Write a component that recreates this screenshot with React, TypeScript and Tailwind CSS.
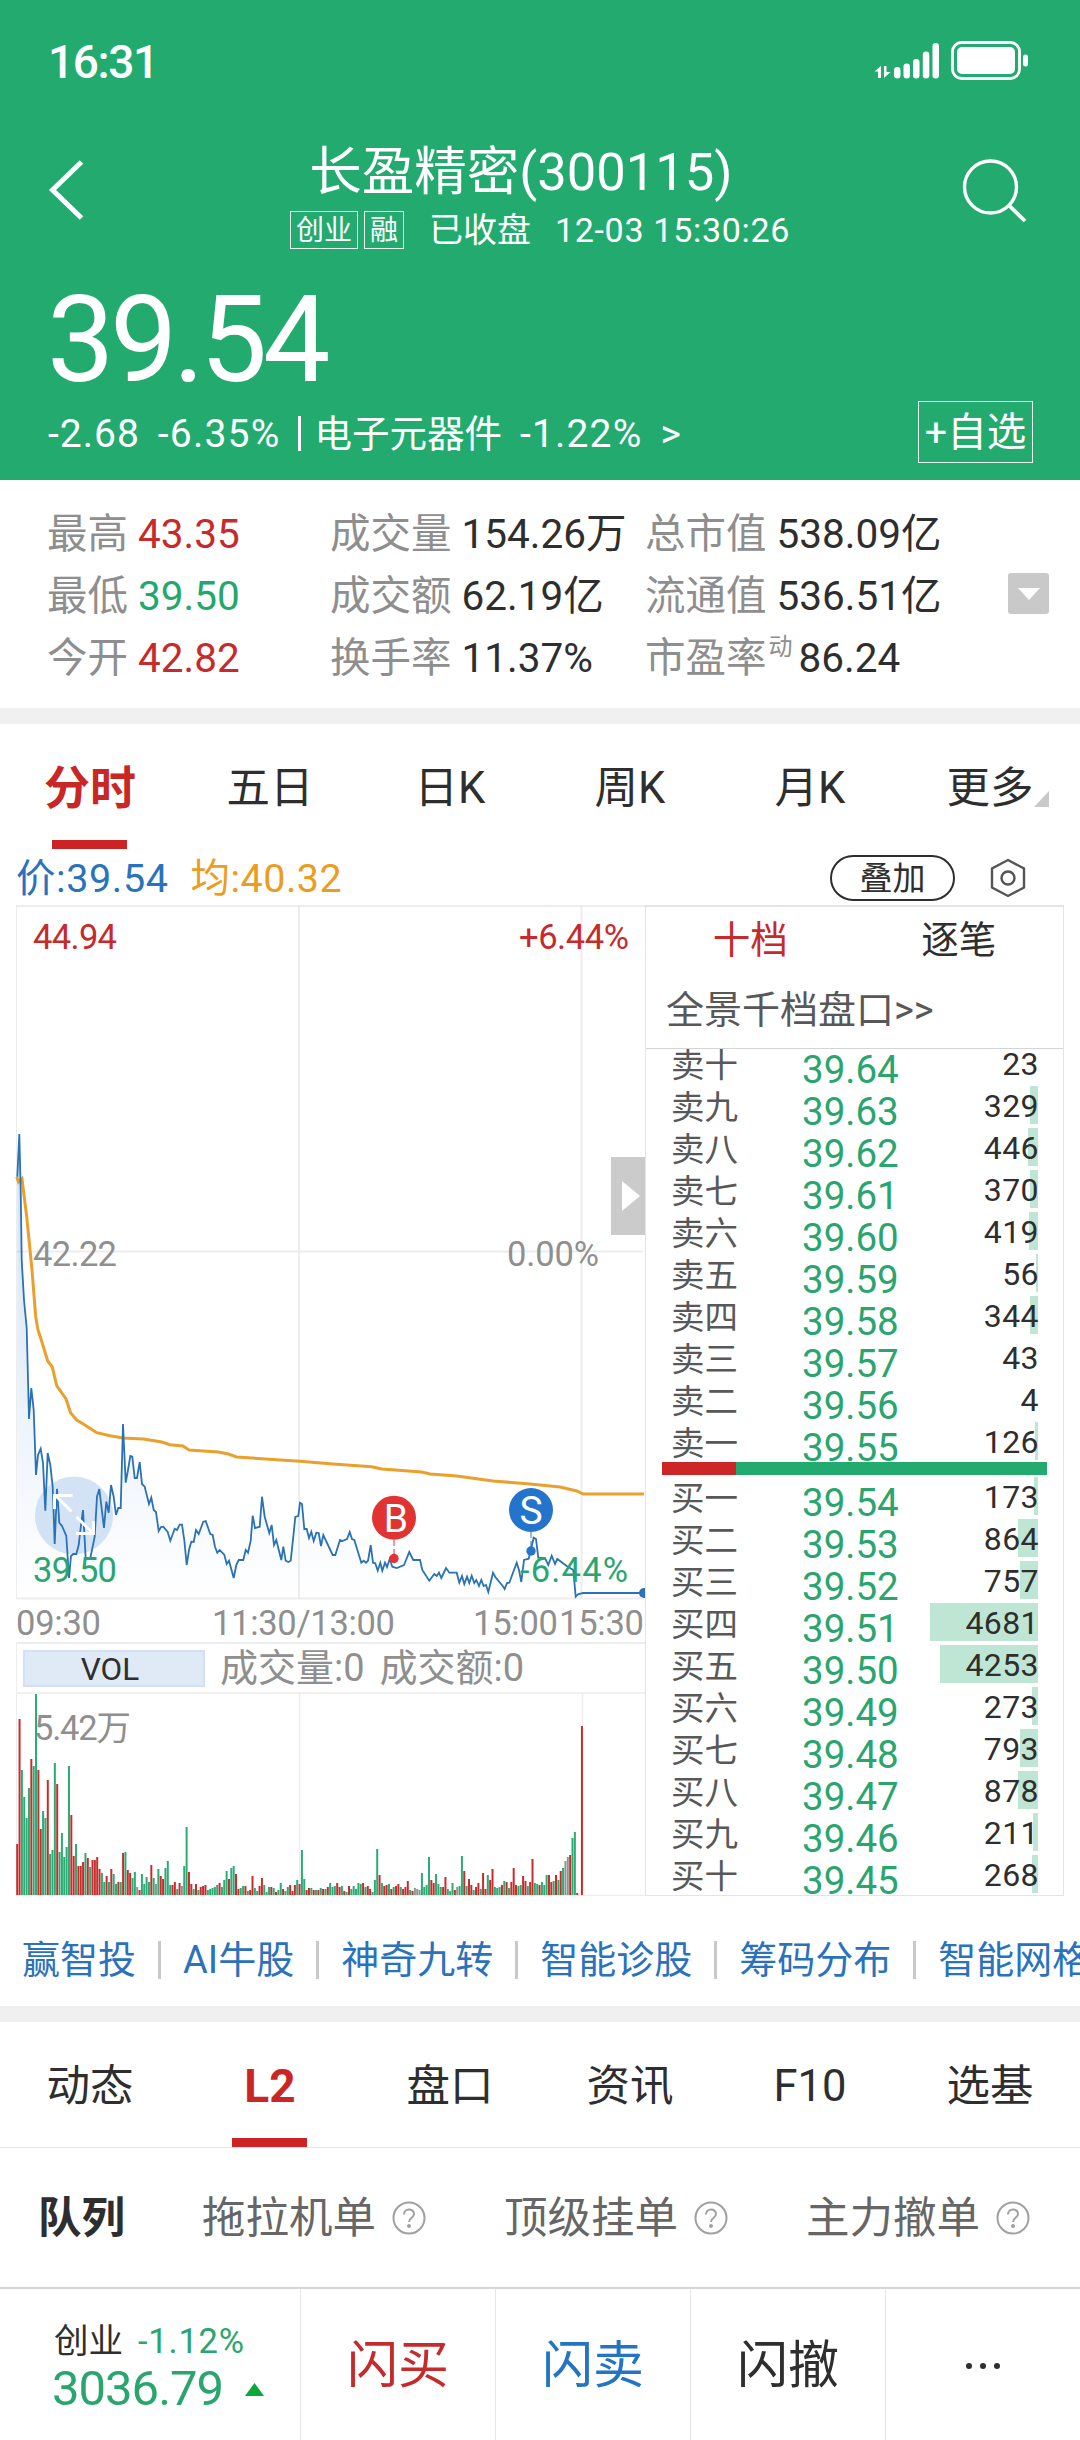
import React from "react";
import clsx from "clsx";

const STATS = [
  [
    { label: "最高", value: "43.35", color: "text-[#c62a2a]" },
    { label: "成交量", value: "154.26万" },
    { label: "总市值", value: "538.09亿" },
  ],
  [
    { label: "最低", value: "39.50", color: "text-[#23a76d]" },
    { label: "成交额", value: "62.19亿" },
    { label: "流通值", value: "536.51亿" },
  ],
  [
    { label: "今开", value: "42.82", color: "text-[#c62a2a]" },
    { label: "换手率", value: "11.37%" },
    { label: "市盈率", sup: "动", value: "86.24" },
  ],
];

const PERIOD_TABS = ["分时", "五日", "日K", "周K", "月K", "更多"];
const INFO_TABS = ["动态", "L2", "盘口", "资讯", "F10", "选基"];
const LINKS = ["赢智投", "AI牛股", "神奇九转", "智能诊股", "筹码分布", "智能网格"];
const SUB_TABS = ["拖拉机单", "顶级挂单", "主力撤单"];

type Level = { name: string; price: string; qty: number; bar: number };

const SELLS: Level[] = [
  { name: "卖十", price: "39.64", qty: 23, bar: 0 },
  { name: "卖九", price: "39.63", qty: 329, bar: 8 },
  { name: "卖八", price: "39.62", qty: 446, bar: 10 },
  { name: "卖七", price: "39.61", qty: 370, bar: 8 },
  { name: "卖六", price: "39.60", qty: 419, bar: 9 },
  { name: "卖五", price: "39.59", qty: 56, bar: 2 },
  { name: "卖四", price: "39.58", qty: 344, bar: 8 },
  { name: "卖三", price: "39.57", qty: 43, bar: 0 },
  { name: "卖二", price: "39.56", qty: 4, bar: 0 },
  { name: "卖一", price: "39.55", qty: 126, bar: 3 },
];

const BUYS: Level[] = [
  { name: "买一", price: "39.54", qty: 173, bar: 4 },
  { name: "买二", price: "39.53", qty: 864, bar: 20 },
  { name: "买三", price: "39.52", qty: 757, bar: 18 },
  { name: "买四", price: "39.51", qty: 4681, bar: 108 },
  { name: "买五", price: "39.50", qty: 4253, bar: 98 },
  { name: "买六", price: "39.49", qty: 273, bar: 6 },
  { name: "买七", price: "39.48", qty: 793, bar: 18 },
  { name: "买八", price: "39.47", qty: 878, bar: 20 },
  { name: "买九", price: "39.46", qty: 211, bar: 5 },
  { name: "买十", price: "39.45", qty: 268, bar: 6 },
];

const PRICE_LINE =
  "17.3,1176.7 19.3,1134 20.7,1190 21.7,1260 24,1300 26.7,1328 29,1419 31.3,1388 33.7,1410 36,1475 38,1455 40.7,1448.7 43,1463 45.3,1510.7 47.7,1453 50.3,1465 52.7,1486.7 54.7,1544 57,1488.7 59.3,1522.7 62,1526 66.3,1536 69,1578 71,1556 73.3,1554 76.3,1554 78.7,1545 81,1525 83,1510 85.7,1558 90.3,1558 94.7,1536.7 97,1496.7 99.3,1489 104,1528 106.3,1501.7 108.7,1512.7 111,1485 113.7,1496.7 116,1515 118.3,1508 120.7,1508 123,1424 125.7,1482.7 128,1470 130.3,1456 132.3,1456.7 134.7,1478 137,1478 139.7,1462 142,1484 144.7,1486.7 149,1504 151.3,1497.7 153.7,1510 156,1512 158.7,1531 161,1527 163.3,1526.7 167.7,1532 170.3,1540.7 174.7,1528.7 177,1530 179.7,1524.7 182,1524.7 184.3,1540 186.7,1565 189,1550 191.3,1541.7 193.7,1542 196,1530 198.7,1534 201.3,1527 203.3,1521.7 205.7,1521 210.3,1534 212.7,1535 215,1546.7 217.3,1552.7 219.7,1550 224.3,1554.7 226.7,1564 229,1560.7 233.7,1578 236.3,1565 238.7,1560 243.3,1560 245.7,1550 248,1552.7 250.7,1540.7 252.7,1515.7 255,1528 259.7,1526.7 262,1496.7 264.7,1516.7 269.3,1533 271.7,1525 274,1545 276.3,1540 281.3,1560 283.3,1546.7 285.7,1560.7 288.3,1562 290.7,1560.7 293.3,1536.7 295.3,1517 298.3,1516 300,1502.7 302,1504 304.3,1529 306.7,1529 309,1538 311.3,1531.7 313.7,1541 316.3,1532.7 318.7,1533 321,1546 323.3,1535 332.7,1555 335.3,1555 340,1540 342.3,1541 347,1539 349.7,1532 352,1539 354.3,1540 361.3,1562.7 363.7,1560.7 366,1562.7 368,1560.7 370.7,1545 373,1562.7 375.3,1563.3 377.7,1570.7 380.3,1562.7 382.3,1570.7 385,1562.7 387,1567 389.7,1559 392.3,1566.7 396.7,1568 404,1565 409.3,1552 413.3,1560 420,1560 422.3,1570 429.3,1580.7 434.3,1574 436.7,1576 439,1572.7 441.3,1578 446,1568 449.3,1572.7 456.7,1572.7 459.3,1582.7 462,1576 464.3,1584 467,1576.7 469.3,1583 471.7,1575.7 474.3,1583 476.3,1580 479,1586 481.3,1580 483.7,1586 486,1585 488.3,1592 493,1572.7 495.3,1577 502.7,1586 504.7,1589 507,1583 509.3,1582.7 516.7,1562.7 519,1570 521.3,1582 524,1560 528.7,1558.7 533.7,1537.7 536,1539 538.3,1557.7 545,1558 548.3,1565 551.7,1555.7 555,1564 557.3,1559 566.7,1566 573.3,1570 575.7,1596.7 578.3,1594 583.3,1593 644,1593";

const AVG_LINE =
  "16.7,1177 18.5,1182 22,1178.7 26.7,1216.7 32,1270 35.7,1316.7 38,1330 40.3,1336.7 47.7,1361 52.3,1367 56.7,1385.7 66,1399 70.7,1413 76.7,1420 83.3,1424 96.7,1432.7 110,1435.7 123,1438 143.3,1439 161.7,1442 170,1444.7 183,1446 189,1450 218.3,1452 228.3,1454 236.7,1457 276.7,1459.7 300,1461.3 333,1464 371.7,1466.7 381.7,1469 421.7,1472 430,1474 456.7,1476 493,1481 530,1484 560,1487 576.7,1491 583.3,1494 644,1494";

// one entry per minute: bar height followed by r (up), g (down) or n (flat)
const VOLUMES =
  "51r 176r 125g 98g 77g 107g 136r 129g 201g 125r 66r 84g 77g 115r 41g 45g 132g 111r 43g 62g 38g 48g 129g 80r 39r 51g 29r 29r 33r 42g 37r 28g 35r 35r 38r 26r 22g 13g 19r 13g 26r 21g 11g 13r 13g 42r 43g 25r 22r 17g 23g 8n 5r 21g 11g 18g 13g 30r 17g 11n 26g 19r 16r 27g 34g 10g 10r 13r 6g 12r 9n 29g 68g 23r 11r 6g 11r 5g 8r 9r 10r 5g 6g 7g 8g 10g 12r 8g 15g 24g 16r 27g 29g 21r 6r 7g 9g 9r 4g 5r 19r 7g 4g 9r 17r 10g 3g 8g 8r 7g 3r 5g 12g 6r 4g 8g 10r 4r 10r 15g 11r 45g 16g 5r 7r 7g 5r 5g 5r 7g 6r 6g 8r 12g 8g 9g 12r 8r 9g 4r 3g 9r 6g 9g 6g 12g 11g 12r 8g 9r 6r 3g 15g 46g 20r 12g 9r 10r 11g 6r 8g 9r 11r 8g 6r 8r 14r 5g 4r 7n 6n 5n 22g 8g 10g 38g 15r 12r 21g 11g 8g 8r 18r 6g 4g 12g 5r 8n 9g 39g 24r 9g 16r 10r 5g 8r 12r 6g 22r 6r 20g 15r 26r 8g 7g 8g 10r 14g 13r 7g 13r 27r 10r 9g 10g 19r 14r 9g 13r 36r 12g 11g 10r 13g 10g 20g 20r 13r 14g 20r 15g 24r 27g 34n 38n 40r 57g 63g 2r 0n 169r"
    .split(" ")
    .map((v) => ({ h: parseInt(v, 10), c: v.slice(-1) }));

const VOLUME_COLOR: Record<string, string> = {
  r: "#c92c2c",
  g: "#2cab74",
  n: "#8c9791",
};

const StatusBar: React.FC = () => (
  <div className="flex items-start justify-between h-[128px] pl-[48px] pr-[50px] pt-[36px]">
    <span className="text-[46px] leading-[52px] font-medium tracking-[-1.4px]">16:31</span>
    <svg width="158" height="48" viewBox="872 36 158 48" fill="#fff">
      <path d="M874.5 71.5 L881 66 V78 H878 V71.5 Z M884 66 H886.500 V72 H890.500 L884 78 Z" />
      <rect x="894" y="67" width="6.500" height="11.500" rx="3.200" />
      <rect x="903.500" y="63.500" width="6.500" height="15" rx="3.200" />
      <rect x="913" y="59" width="6.500" height="19.500" rx="3.200" />
      <rect x="922.800" y="51.500" width="6.500" height="27" rx="3.200" />
      <rect x="932.500" y="43" width="6.500" height="35.500" rx="3.200" />
      <rect x="952.500" y="42.500" width="67" height="36" rx="9" fill="none" stroke="#fff" strokeWidth="2.800" />
      <rect x="957" y="47" width="58" height="27" rx="5" />
      <rect x="1023" y="54.500" width="5" height="12" rx="2.500" />
    </svg>
  </div>
);

const Header: React.FC = () => (
  <header className="bg-[#23ab6f] text-white h-[480px]">
    <StatusBar />
    <div className="flex justify-between h-[136px] pl-[46px] pr-[52px]">
      <svg width="72" height="64" viewBox="0 0 72 64" className="mt-[31px]">
        <path d="M35.500 3 L6.500 31 L35.500 59" fill="none" stroke="#fff" strokeWidth="5" />
      </svg>
      <div className="flex flex-col items-center pt-[14px]">
        <h1 className="mr-[38px] text-[52.500px] leading-[60px]">长盈精密(300115)</h1>
        <div className="flex items-center mt-[9px] h-[38px] text-[34px] leading-[38px]">
          <span className="border border-white/90 w-[68px] h-[38px] text-center text-[28px] leading-[37px]">创业</span>
          <span className="border border-white/90 w-[40px] h-[38px] ml-[6px] text-center text-[28px] leading-[37px]">融</span>
          <span className="ml-[25px]">已收盘</span>
          <span className="ml-[24px] tracking-[0.7px]">12-03 15:30:26</span>
        </div>
      </div>
      <svg width="66" height="70" viewBox="962 156 66 70" className="mt-[28px]" fill="none" stroke="#fff" strokeWidth="3.400">
        <circle cx="990.500" cy="187" r="26" />
        <path d="M1009 205.500 L1025 221" strokeWidth="3.800" />
      </svg>
    </div>
    <div className="h-[137px] pl-[47px] pt-[6px] text-[120px] leading-[140px] tracking-[-4.500px]">39.54</div>
    <div className="flex items-center justify-between h-[62px] pl-[48px] pr-[47px]">
      <div className="flex items-center pt-[3px] text-[39px] leading-[46px]">
        <span className="tracking-[1px]">-2.68</span>
        <span className="ml-[18px] tracking-[1.2px]">-6.35%</span>
        <span className="w-[3px] h-[35px] ml-[18px] bg-white" />
        <span className="ml-[13px] text-[37.500px]">电子元器件</span>
        <span className="ml-[18px] tracking-[1.2px]">-1.22%</span>
        <span className="ml-[18px]">&gt;</span>
      </div>
      <button className="border border-white/90 w-[115px] h-[62px] text-[39.500px] leading-[61px]">+自选</button>
    </div>
  </header>
);

const Stats: React.FC = () => (
  <section className="relative h-[228px] pt-[23px] pl-[47px]">
    {STATS.map((row, i) => (
      <div key={i} className="grid grid-cols-[283px_315px_1fr] h-[62px] text-[40.500px] leading-[62px] text-[#2e2e2e]">
        {row.map((s) => (
          <div key={s.label} className="flex whitespace-nowrap">
            <span className="text-[#8e8e8e]">{s.label}</span>
            {"sup" in s && <sup className="ml-[2px] -mr-[4px] text-[24px] leading-[40px] top-0 text-[#8e8e8e]">{s.sup}</sup>}
            <span className={clsx("ml-[10px]", "color" in s && s.color)}>{s.value}</span>
          </div>
        ))}
      </div>
    ))}
    <div className="absolute left-[1008px] top-[93px] w-[41px] h-[41px] rounded-[3px] bg-[#c9c9c9] flex items-center justify-center">
      <svg width="22" height="12" viewBox="0 0 22 12">
        <path d="M0 0 H22 L11 12 Z" fill="#fff" />
      </svg>
    </div>
  </section>
);

const Tabs: React.FC<{ items: string[]; active: string; className: string }> = ({ items, active, className }) => (
  <nav className={clsx("grid grid-cols-6 grid-rows-1 text-[43.500px] text-center text-[#2e2e2e]", className)}>
    {items.map((t) => (
      <div key={t} className={clsx("relative", t === active && "font-bold text-[#c92626] text-[46px]")}>
        {t}
        {t === active && <span className="absolute bottom-0 left-[52px] w-[75px] h-[9px] bg-[#cc2424]" />}
        {t === "更多" && (
          <svg className="absolute right-[31px] bottom-[42px]" width="15" height="16" viewBox="0 0 15 16">
            <path d="M15 0 V16 H0 Z" fill="#c9c9c9" />
          </svg>
        )}
      </div>
    ))}
  </nav>
);

const PriceInfo: React.FC = () => (
  <div className="flex items-center h-[56px] pl-[16px] pr-[54px] pt-[2px] text-[39.500px] leading-[57px]">
    <span className="text-[#2a72bb] tracking-[0.6px]">价:39.54</span>
    <span className="ml-[22px] text-[#eb9d22] tracking-[0.5px]">均:40.32</span>
    <span className="ml-auto w-[125px] h-[46px] rounded-full border-2 border-[#2e2e2e] text-center text-[33px] leading-[43px] text-[#2e2e2e]">
      叠加
    </span>
    <svg className="ml-[35px]" width="36" height="40" viewBox="0 0 36 40" fill="none" stroke="#555" strokeWidth="2.400">
      <path d="M18 2 L34 10.500 V29.500 L18 38 L2 29.500 V10.500 Z" />
      <circle cx="18" cy="20" r="6.500" />
    </svg>
  </div>
);

const PriceChart: React.FC = () => (
  <svg width="645" height="737" viewBox="0 905 645 737" className="block" fontSize="34.5">
    <defs>
      <linearGradient id="area" x1="0" y1="0" x2="0" y2="1">
        <stop offset="0" stopColor="#2a78c4" stopOpacity="0.22" />
        <stop offset="1" stopColor="#2a78c4" stopOpacity="0" />
      </linearGradient>
    </defs>
    <g stroke="#ededed" strokeWidth="2" fill="none">
      <path d="M16 906 H645 M16 1251.500 H643 M16 1598.500 H645 M299 906 V1598 M581.500 906 V1598" />
      <path d="M16.500 906 V1598" strokeWidth="1" />
    </g>
    <polygon points={`17,1597 ${PRICE_LINE} 644,1597`} fill="url(#area)" />
    <g fill="#8f8f8f">
      <text x="33" y="1266" textLength="84">42.22</text>
      <text x="507" y="1266" textLength="92">0.00%</text>
    </g>
    <circle cx="74" cy="1515.500" r="39" fill="#c4daf1" fillOpacity="0.75" />
    <polyline points={AVG_LINE} fill="none" stroke="#e9a02c" strokeWidth="3" />
    <polyline points={PRICE_LINE} fill="none" stroke="#2a72b5" strokeWidth="1.800" />
    <path
      d="M71.500 1511.500 L56 1496 M54.500 1509 V1495.500 H72.500 M76.500 1517 L93 1533 M76 1533.500 H93.500 V1521"
      fill="none"
      stroke="#fff"
      strokeWidth="3"
    />
    <g fill="#c62a2a">
      <text x="33" y="949" textLength="84">44.94</text>
      <text x="519" y="949" textLength="110">+6.44%</text>
    </g>
    <g fill="#2ba56f">
      <text x="33" y="1582" textLength="84">39.50</text>
      <text x="520" y="1582" textLength="108">-6.44%</text>
    </g>
    <circle cx="644" cy="1593" r="5" fill="#2a72b5" />

    {/* trade marks */}
    <path d="M394 1540 V1556" stroke="#e23333" strokeDasharray="6 3" />
    <circle cx="394" cy="1517.700" r="22" fill="#e23333" />
    <circle cx="394" cy="1558.500" r="4.700" fill="#e23333" />
    <path d="M531 1532 V1548" stroke="#2474cb" strokeDasharray="6 3" />
    <circle cx="531" cy="1510" r="22" fill="#2474cb" />
    <circle cx="531" cy="1551" r="4.700" fill="#2474cb" />
    <g fill="#fff" fontSize="39" textAnchor="middle">
      <text x="396" y="1531.500">B</text>
      <text x="531" y="1524">S</text>
    </g>

    <g fill="#8f8f8f">
      <text x="16" y="1635" textLength="85">09:30</text>
      <text x="212" y="1635" textLength="183">11:30/13:00</text>
      <text x="473" y="1635" textLength="85">15:00</text>
      <text x="559" y="1635" textLength="85">15:30</text>
    </g>

    {/* expand handle for the order book */}
    <rect x="611" y="1157" width="34" height="78" fill="#cbcbcb" />
    <path d="M622 1181 L640 1196 L622 1211 Z" fill="#fff" />
  </svg>
);

const VolumeChart: React.FC = () => (
  <svg width="645" height="204" viewBox="0 1692 645 204" className="block" fontSize="34.5">
    <g stroke="#ededed" strokeWidth="1.500" fill="none">
      <path d="M16 1693 H645 M16 1895.500 H645 M299.500 1693 V1895 M582.500 1693 V1895" />
      <path d="M16.500 1693 V1895" strokeWidth="1" />
    </g>
    <text x="34" y="1740" fill="#8f8f8f" textLength="97">
      5.42万
    </text>
    {VOLUMES.map((v, i) => (
      <rect key={i} x={16.2 + i * 2.353} y={1895 - v.h} width="2" height={v.h} fill={VOLUME_COLOR[v.c]} />
    ))}
  </svg>
);

const LevelRow: React.FC<{ level: Level }> = ({ level }) => (
  <div className="relative flex h-[42px] pl-[25px] pr-[24px]">
    <span
      className="absolute right-[25px] top-0 h-[38px] bg-[#bfe6d4]"
      style={{ width: level.bar }}
    />
    <span className="w-[131px] text-[33.500px] leading-[43px] text-[#585858]">{level.name}</span>
    <span className="text-[38.500px] leading-[51px] text-[#2ba56f]">{level.price}</span>
    <span className="relative ml-auto text-[32px] leading-[40px] text-[#2e2e2e] tracking-[0.4px]">{level.qty}</span>
  </div>
);

const OrderBook: React.FC = () => (
  <div className="w-[419px] h-[991px] border-x border-t-2 border-b border-[#e4e4e4]">
    <div className="grid grid-cols-2 h-[67px] text-center text-[37.500px] leading-[67px] text-[#2e2e2e]">
      <span className="text-[#c62a2a]">十档</span>
      <span>逐笔</span>
    </div>
    <div className="h-[75px] pl-[20px] border-b border-[#d4d4d4] text-[38px] leading-[73px] text-[#585858]">
      全景千档盘口&gt;&gt;
    </div>
    <div className="-mt-[5px] h-[418px]">
      {SELLS.map((l) => (
        <LevelRow key={l.name} level={l} />
      ))}
    </div>
    <div className="relative flex h-[13px] mb-[2px] ml-[16px] mr-[16px]">
      <span className="w-[74px] bg-[#cd2626]" />
      <span className="flex-1 bg-[#23ab6f]" />
    </div>
    {BUYS.map((l) => (
      <LevelRow key={l.name} level={l} />
    ))}
  </div>
);

const Market: React.FC = () => (
  <div className="flex h-[991px]">
    <div className="w-[645px]">
      <PriceChart />
      <div className="flex items-center h-[50px] ml-[16px] pl-[6px] border-t-2 border-l border-[#ededed] text-[38px] leading-[50px] text-[#8f8f8f] whitespace-nowrap">
        <span className="w-[182px] h-[37px] pr-[8px] border-2 border-[#d2e0f5] bg-[#e0e9f6] text-center text-[31.500px] leading-[35px] text-[#2e2e2e]">
          VOL
        </span>
        <span className="ml-[15px]">成交量:0</span>
        <span className="ml-[15px]">成交额:0</span>
      </div>
      <VolumeChart />
    </div>
    <OrderBook />
  </div>
);

const Links: React.FC = () => (
  <div className="flex items-center h-[110px] pt-[18px] pl-[22px] overflow-hidden whitespace-nowrap text-[38px] leading-[50px] text-[#2a72bb]">
    {LINKS.map((l, i) => (
      <React.Fragment key={l}>
        {i > 0 && <span className="shrink-0 w-[3px] h-[38px] mx-[22px] bg-[#c9c9c9]" />}
        <span className="shrink-0">{l}</span>
      </React.Fragment>
    ))}
  </div>
);

const SubTabs: React.FC = () => (
  <div className="flex items-center h-[139px] pt-[2px] pl-[38px] text-[43.500px] leading-[60px] text-[#666]">
    <span className="shrink-0 w-[164px] font-bold text-[#2e2e2e]">队列</span>
    {SUB_TABS.map((t) => (
      <div key={t} className="shrink-0 flex items-center w-[302px]">
        {t}
        <svg className="ml-[16px] -mt-[2px]" width="34" height="34" viewBox="0 0 34 34" fill="none" stroke="#a0a0a0" strokeWidth="2">
          <circle cx="17" cy="17" r="15.500" />
          <path d="M12 13.500 C12 7 22 7 22 13 C22 17 17 16.500 17 21" />
          <circle cx="17" cy="25" r="1" fill="#a0a0a0" />
        </svg>
      </div>
    ))}
  </div>
);

const BottomBar: React.FC = () => (
  <footer className="grid grid-cols-[300px_195px_195px_195px_195px] h-[153px] border-t-2 border-[#d6d6d6] text-center text-[51px] leading-[154px] text-[#2e2e2e]">
    <div className="pl-[54px] pt-[30px] text-left text-[#2ba56f]">
      <div className="flex text-[34.500px] leading-[44px]">
        <span className="text-[#2e2e2e]">创业</span>
        <span className="ml-[15px] tracking-[0.8px]">-1.12%</span>
      </div>
      <div className="flex items-center -ml-[2px] text-[49px] leading-[52px] tracking-[-1px]">
        3036.79
        <svg className="ml-[22px]" width="19" height="13" viewBox="0 0 19 13">
          <path d="M9.500 0 L19 13 H0 Z" fill="#07a83c" />
        </svg>
      </div>
    </div>
    <div className="border-l border-[#e6e6e6] text-[#c62a2a]">闪买</div>
    <div className="border-l border-[#e6e6e6] text-[#2474c4]">闪卖</div>
    <div className="border-l border-[#e6e6e6]">闪撤</div>
    <div className="border-l border-[#e6e6e6] flex items-center justify-center gap-[8px]">
      <i className="w-[6px] h-[6px] rounded-full bg-[#2e2e2e]" />
      <i className="w-[6px] h-[6px] rounded-full bg-[#2e2e2e]" />
      <i className="w-[6px] h-[6px] rounded-full bg-[#2e2e2e]" />
    </div>
  </footer>
);

export default function App() {
  return (
    <div className="w-[1080px] h-[2440px] overflow-hidden bg-white font-['Roboto','Noto_Sans_CJK_SC',sans-serif]">
      <Header />
      <Stats />
      <div className="h-[16px] bg-[#f0f0f0]" />
      <Tabs items={PERIOD_TABS} active="分时" className="h-[125px] leading-[129px]" />
      <PriceInfo />
      <Market />
      <Links />
      <div className="h-[16px] bg-[#f0f0f0]" />
      <Tabs items={INFO_TABS} active="L2" className="h-[126px] leading-[129px] border-b border-[#e6e6e6]" />
      <SubTabs />
      <BottomBar />
    </div>
  );
}
